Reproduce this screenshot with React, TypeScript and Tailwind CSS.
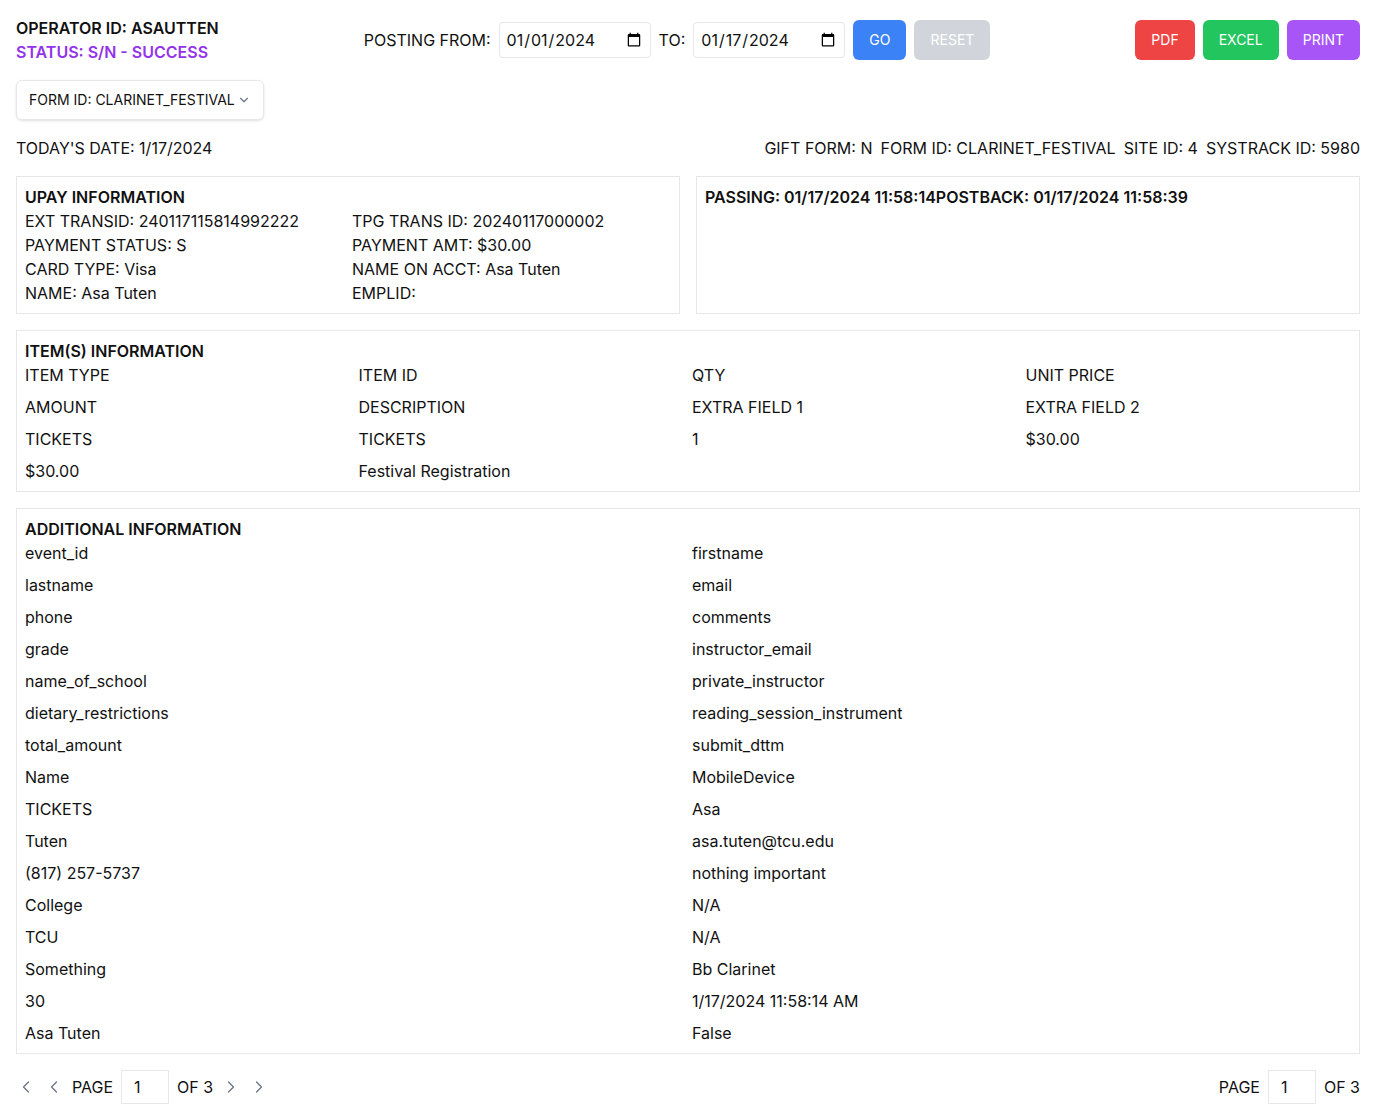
import React from 'react';
import { ChevronDown, ChevronLeft, ChevronRight } from 'lucide-react';

const upayRows: [string, string][] = [
  ['EXT TRANSID: 240117115814992222', 'TPG TRANS ID: 20240117000002'],
  ['PAYMENT STATUS: S', 'PAYMENT AMT: $30.00'],
  ['CARD TYPE: Visa', 'NAME ON ACCT: Asa Tuten'],
  ['NAME: Asa Tuten', 'EMPLID:'],
];

const itemCells = [
  'ITEM TYPE', 'ITEM ID', 'QTY', 'UNIT PRICE',
  'AMOUNT', 'DESCRIPTION', 'EXTRA FIELD 1', 'EXTRA FIELD 2',
  'TICKETS', 'TICKETS', '1', '$30.00',
  '$30.00', 'Festival Registration', '', '',
];

const additional = [
  'event_id', 'firstname',
  'lastname', 'email',
  'phone', 'comments',
  'grade', 'instructor_email',
  'name_of_school', 'private_instructor',
  'dietary_restrictions', 'reading_session_instrument',
  'total_amount', 'submit_dttm',
  'Name', 'MobileDevice',
  'TICKETS', 'Asa',
  'Tuten', 'asa.tuten@tcu.edu',
  '(817) 257-5737', 'nothing important',
  'College', 'N/A',
  'TCU', 'N/A',
  'Something', 'Bb Clarinet',
  '30', '1/17/2024 11:58:14 AM',
  'Asa Tuten', 'False',
];

const PageBox = () => (
  <div className="flex items-center gap-2">
    <span>PAGE</span>
    <input
      type="text"
      defaultValue="1"
      className="w-12 h-[34px] px-3 border border-gray-200 outline-none"
    />
    <span>OF 3</span>
  </div>
);

export default function App() {
  return (
    <div
      className="p-4 text-base text-[#111] bg-white"
      style={{ fontFamily: 'Inter, "Liberation Sans", sans-serif' }}
    >
      {/* header */}
      <div className="flex items-center justify-between">
        <div className="font-semibold">
          <div>OPERATOR ID: ASAUTTEN</div>
          <div className="text-[#9333ea]">STATUS: S/N - SUCCESS</div>
        </div>
        <div className="flex items-center gap-2">
          <span>POSTING FROM:</span>
          <input
            type="date"
            defaultValue="2024-01-01"
            className="w-[152px] h-9 px-1.5 border border-gray-200 rounded-sm"
          />
          <span>TO:</span>
          <input
            type="date"
            defaultValue="2024-01-17"
            className="w-[152px] h-9 px-1.5 border border-gray-200 rounded-sm"
          />
          <button className="h-10 px-4 rounded-md bg-[#3b82f6] text-white text-sm">GO</button>
          <button className="h-10 px-4 rounded-md bg-[#d1d5db] text-white text-sm">RESET</button>
        </div>
        <div className="flex items-center gap-2">
          <button className="h-10 px-4 rounded-md bg-[#ef4444] text-white text-sm">PDF</button>
          <button className="h-10 px-4 rounded-md bg-[#22c55e] text-white text-sm">EXCEL</button>
          <button className="h-10 px-4 rounded-md bg-[#a855f7] text-white text-sm">PRINT</button>
        </div>
      </div>

      <div className="mt-4">
        <button className="h-10 px-3 inline-flex items-center gap-0.5 whitespace-nowrap border border-gray-200 rounded-md shadow-sm text-sm">
          FORM ID: CLARINET_FESTIVAL
          <ChevronDown size={14} className="text-gray-500" />
        </button>
      </div>

      <div className="mt-4 flex justify-between">
        <span>TODAY'S DATE: 1/17/2024</span>
        <div className="flex gap-2">
          <span>GIFT FORM: N</span>
          <span>FORM ID: CLARINET_FESTIVAL</span>
          <span>SITE ID: 4</span>
          <span>SYSTRACK ID: 5980</span>
        </div>
      </div>

      <div className="mt-4 grid grid-cols-2 gap-4">
        <div className="border border-gray-200 p-2">
          <div className="font-semibold">UPAY INFORMATION</div>
          <div className="grid grid-cols-2 gap-x-2">
            {upayRows.map(([a, b]) => (
              <React.Fragment key={a}>
                <div>{a}</div>
                <div>{b}</div>
              </React.Fragment>
            ))}
          </div>
        </div>
        <div className="border border-gray-200 p-2">
          <div className="font-semibold">PASSING: 01/17/2024 11:58:14POSTBACK: 01/17/2024 11:58:39</div>
        </div>
      </div>

      <div className="mt-4 border border-gray-200 p-2">
        <div className="font-semibold">ITEM(S) INFORMATION</div>
        <div className="grid grid-cols-4 gap-2">
          {itemCells.map((c, i) => (
            <div key={i} className="h-6">{c}</div>
          ))}
        </div>
      </div>

      <div className="mt-4 border border-gray-200 p-2">
        <div className="font-semibold">ADDITIONAL INFORMATION</div>
        <div className="grid grid-cols-2 gap-2">
          {additional.map((c, i) => (
            <div key={i} className="h-6">{c}</div>
          ))}
        </div>
      </div>

      <div className="mt-4 flex items-center justify-between">
        <div className="flex items-center gap-2">
          <ChevronLeft size={20} strokeWidth={1.5} className="text-gray-500" />
          <ChevronLeft size={20} strokeWidth={1.5} className="text-gray-500" />
          <PageBox />
          <ChevronRight size={20} strokeWidth={1.5} className="text-gray-500" />
          <ChevronRight size={20} strokeWidth={1.5} className="text-gray-500" />
        </div>
        <PageBox />
      </div>
    </div>
  );
}
